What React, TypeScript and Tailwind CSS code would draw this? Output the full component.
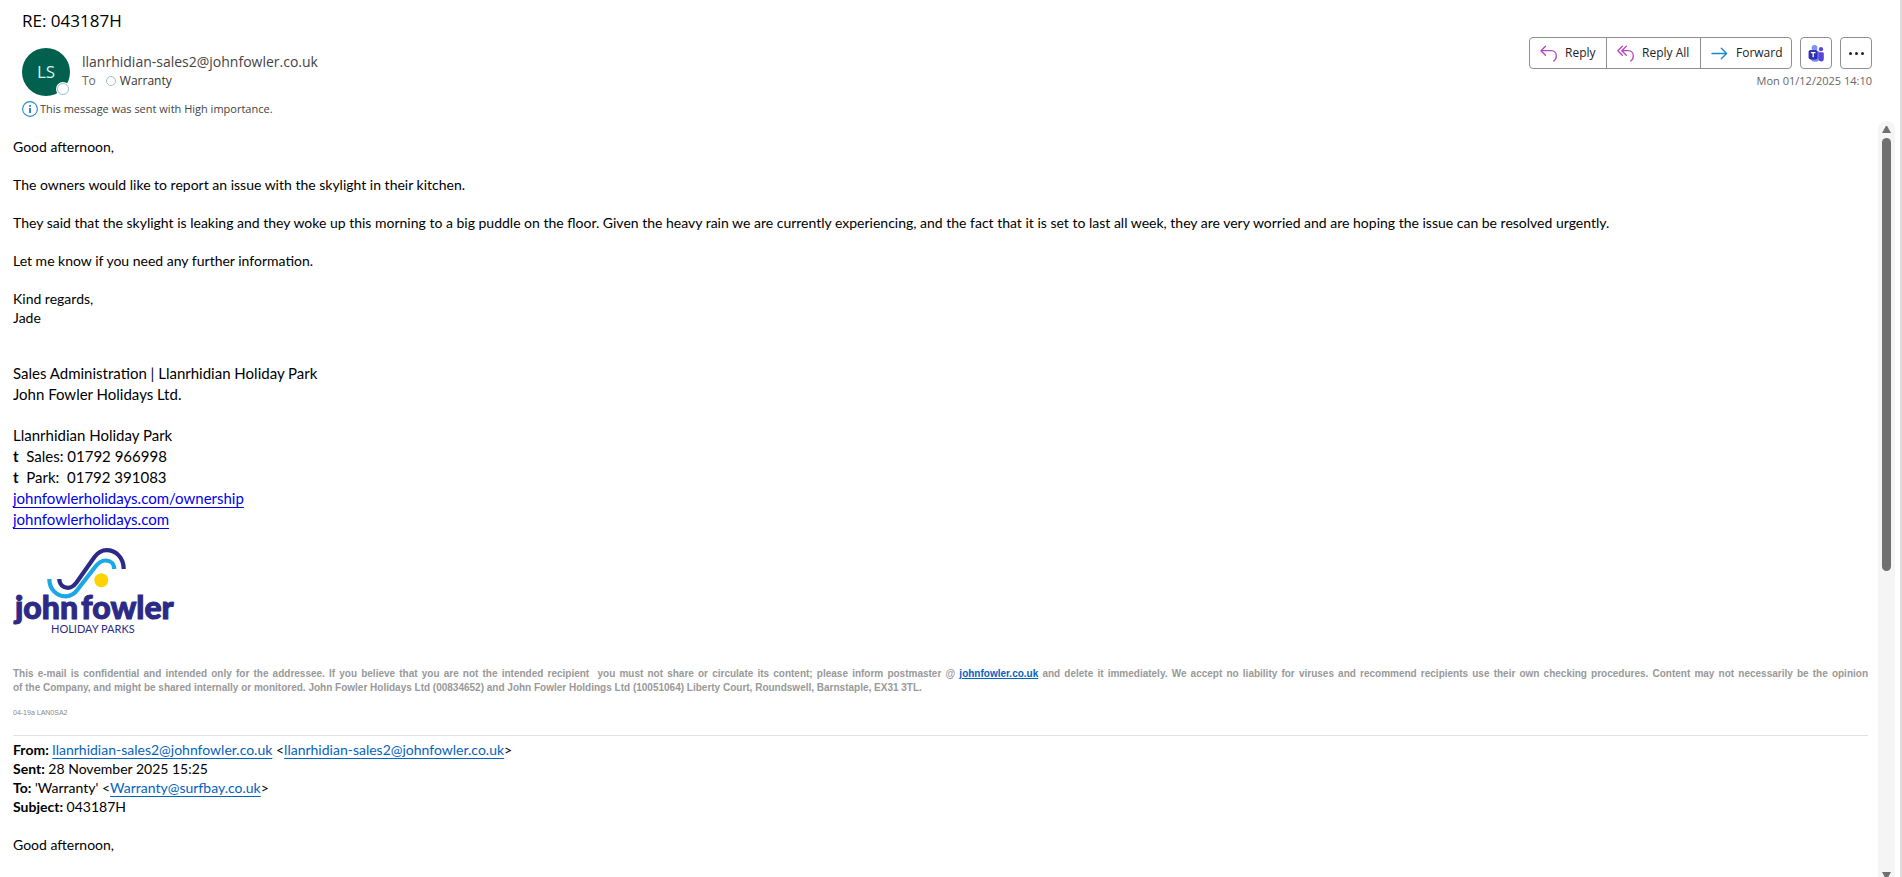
import React from 'react';

const legalLink = 'font-bold text-[#0563c1] underline';
const mailLink = 'text-[#0563c1] underline underline-offset-3';
const siteLink = 'text-[#0000ee] underline underline-offset-3';

const ReplyIcon = () => (
  <svg width="17" height="17" viewBox="0 0 17 17" fill="none" stroke="#b146c2" strokeWidth="1.3" strokeLinecap="round" strokeLinejoin="round">
    <path d="M5.5 1.2 1 5.7l4.5 4.5M1 5.7h10.3c3 0 5 2.2 5 5.2 0 2.4-1 4-2.6 5" />
  </svg>
);

const ReplyAllIcon = () => (
  <svg width="17" height="17" viewBox="0 0 17 17" fill="none" stroke="#b146c2" strokeWidth="1.3" strokeLinecap="round" strokeLinejoin="round">
    <path d="M5.3 1.2.8 5.7l4.5 4.5M9.3 1.2 4.8 5.7l4.5 4.5M4.8 5.7h6.5c3 0 5 2.2 5 5.2 0 2.4-1 4-2.6 5" />
  </svg>
);

const ForwardIcon = () => (
  <svg width="17" height="17" viewBox="0 0 17 17" fill="none" stroke="#1a86d0" strokeWidth="1.3" strokeLinecap="round" strokeLinejoin="round">
    <path d="M1 8.5h14.5M10.3 3.2l5.3 5.3-5.3 5.2" />
  </svg>
);

const TeamsIcon = () => (
  <svg width="17" height="17" viewBox="0 0 17 17">
    <circle cx="6.5" cy="3" r="2.9" fill="#7b93f8" />
    <path d="M3 6.2h8.2v7a3.6 3.6 0 0 1-3.6 3.6H6.5A3.6 3.6 0 0 1 3 13.2z" fill="#748cf8" />
    <circle cx="13" cy="4.2" r="2.1" fill="#5a45d8" />
    <path d="M10.6 7.2h4a1.2 1.2 0 0 1 1.2 1.2v5.4a2.6 2.6 0 0 1-5.2 0z" fill="#5a45d8" />
    <rect x="0.6" y="5" width="9" height="9.4" rx="1.8" fill="#332fae" />
    <path d="M2.9 7.6h4.6M5.2 7.6v4.6" stroke="#fff" strokeWidth="1.3" />
  </svg>
);

const MoreIcon = () => (
  <svg width="17" height="17" viewBox="0 0 17 17" fill="#222">
    <circle cx="2.5" cy="8.5" r="1.5" />
    <circle cx="8.5" cy="8.5" r="1.5" />
    <circle cx="14.5" cy="8.5" r="1.5" />
  </svg>
);

const InfoIcon = () => (
  <svg width="16" height="16" viewBox="0 0 16 16" fill="none">
    <circle cx="8" cy="8" r="7.4" stroke="#2b88d0" strokeWidth="1.1" />
    <path d="M8 7v5M8 4v1.8" stroke="#1a7acb" strokeWidth="1.8" />
  </svg>
);

const Logo = () => (
  <svg width="162" height="92" viewBox="0 0 162 92" className="overflow-visible" role="img" aria-label="john fowler holiday parks">
    <g fill="none" strokeWidth="4.2">
      <path d="M46.3 31c0 5.500 4 8.800 8.500 8.800 4 0 6.200-2 8.500-5L81.500 9C85 4.500 88.500 2.200 93.500 2.200c9.500 0 17.200 7.500 17.200 18.800" stroke="#2c2a86" />
      <path d="M36.3 31c0 10 7.200 17.300 16.200 17.300 6 0 9.500-3 12.500-7.300L82.500 18.500c3-4 6-6 10.200-6 4.800 0 8.500 3.300 8.500 8.500" stroke="#1ba9e6" />
    </g>
    <circle cx="88.3" cy="32.3" r="7" fill="#fdd307" />
    <g fill="#2c2a86" fontFamily="Lato, sans-serif">
      <text x="2" y="71" fontSize="32" fontWeight="900" stroke="#2c2a86" strokeWidth="1">john</text>
      <text x="68" y="71" fontSize="32" fontWeight="900" stroke="#2c2a86" strokeWidth="1">fowler</text>
      <text x="38" y="85" fontSize="11">HOLIDAY PARKS</text>
    </g>
  </svg>
);

export default function App() {
  return (
    <div className="flex h-screen flex-col overflow-hidden border-r-2 border-[#dcdcdc] bg-white font-['Open_Sans',sans-serif] text-[#444]">
      <header className="flex shrink-0 flex-col pr-7 pl-[22px]">
        <h1 className="pt-[9px] text-[17px] leading-6 text-black">RE: 043187H</h1>

        <div className="flex items-start justify-between pt-[3px]">
          <div className="flex items-start gap-3 pt-3">
            <div className="relative flex size-12 items-center justify-center rounded-full bg-[#02604f] text-[17px] text-[#d9efe9]">
              LS
              <span className="absolute right-0 bottom-0 flex size-3.5 items-center justify-center rounded-full bg-white">
                <span className="size-3 rounded-full border border-[#9fbfcb]" />
              </span>
            </div>
            <div>
              <p className="pt-1 text-sm leading-5">llanrhidian-sales2@johnfowler.co.uk</p>
              <p className="flex items-center text-xs leading-[18px]">
                <span className="mr-2.5 text-[#666]">To</span>
                <span className="mr-1 size-2.5 rounded-full border border-[#9fbfcb]" />
                <span className="text-[#333]">Warranty</span>
              </p>
            </div>
          </div>

          <div className="flex flex-col items-end gap-0.5 pt-px">
            <div className="flex gap-2 text-xs text-[#222]">
              <div className="flex h-8 divide-x divide-[#8f8f8f] rounded border border-[#8f8f8f]">
                <button className="flex w-[77px] items-center gap-2 pl-2.5"><ReplyIcon />Reply</button>
                <button className="flex w-[94px] items-center gap-2 pl-2.5 whitespace-nowrap"><ReplyAllIcon />Reply All</button>
                <button className="flex w-[90px] items-center gap-2 pl-2.5"><ForwardIcon />Forward</button>
              </div>
              <button aria-label="Share to Teams" className="flex size-8 items-center justify-center rounded border border-[#8f8f8f]"><TeamsIcon /></button>
              <button aria-label="More actions" className="flex size-8 items-center justify-center rounded border border-[#8f8f8f]"><MoreIcon /></button>
            </div>
            <time className="text-[11px] leading-5 text-[#666]">Mon 01/12/2025 14:10</time>
          </div>
        </div>

        <p className="flex items-center gap-0.5 pt-[5px] pb-1 text-[11px] leading-4">
          <InfoIcon />
          This message was sent with High importance.
        </p>
      </header>

      <div className="flex min-h-0 flex-1">
        {/* Message body */}
        <main className="min-w-0 flex-1 overflow-hidden pt-4 pr-2.5 pl-[13px] font-[Lato,sans-serif] text-sm leading-[19px] text-black">
          <div className="flex flex-col gap-[19px]">
            <p>Good afternoon,</p>
            <p>The owners would like to report an issue with the skylight in their kitchen.</p>
            <p>They said that the skylight is leaking and they woke up this morning to a big puddle on the floor. Given the heavy rain we are currently experiencing, and the fact that it is set to last all week, they are very worried and are hoping the issue can be resolved urgently.</p>
            <p>Let me know if you need any further information.</p>
            <p>Kind regards,<br />Jade</p>
          </div>

          {/* Signature */}
          <div className="pt-9 text-[15px] leading-[21px]">
            <p>Sales Administration | Llanrhidian Holiday Park</p>
            <p>John Fowler Holidays Ltd.</p>
            <p className="pt-5">Llanrhidian Holiday Park</p>
            <p className="whitespace-pre"><b>t</b>  Sales: 01792 966998</p>
            <p className="whitespace-pre"><b>t</b>  Park:  01792 391083</p>
            <p><a href="#ownership" className={siteLink}>johnfowlerholidays.com/ownership</a></p>
            <p><a href="#home" className={siteLink}>johnfowlerholidays.com</a></p>
          </div>
          <div className="pt-[18px] pb-5">
            <Logo />
          </div>

          <div className="pt-[7px] font-['Liberation_Sans',sans-serif] text-[10px] leading-[14px] font-bold text-[#999]">
            <p className="xl:[text-align-last:justify]">
              This e-mail is confidential and intended only for the addressee. If you believe that you are not the intended recipient &nbsp;you must not share or circulate its content; please inform postmaster @ <a href="#site" className={legalLink}>johnfowler.co.uk</a> and delete it immediately. We accept no liability for viruses and recommend recipients use their own checking procedures. Content may not necessarily be the opinion
            </p>
            <p>of the Company, and might be shared internally or monitored. John Fowler Holidays Ltd (00834652) and John Fowler Holdings Ltd (10051064) Liberty Court, Roundswell, Barnstaple, EX31 3TL.</p>
          </div>
          <p className="pt-3 font-['Liberation_Sans',sans-serif] text-[7px] leading-3 text-[#888]">04-19a LAN0SA2</p>

          {/* Quoted message */}
          <div className="mt-4 border-t border-[#e1e1e1] pt-1">
            <p><b>From:</b> <a href="#from" className={mailLink}>llanrhidian-sales2@johnfowler.co.uk</a> &lt;<a href="#from" className={mailLink}>llanrhidian-sales2@johnfowler.co.uk</a>&gt;</p>
            <p><b>Sent:</b> 28 November 2025 15:25</p>
            <p><b>To:</b> 'Warranty' &lt;<a href="#to" className={mailLink}>Warranty@surfbay.co.uk</a>&gt;</p>
            <p><b>Subject:</b> 043187H</p>
            <p className="pt-[19px]">Good afternoon,</p>
          </div>
        </main>

        {/* Scrollbar */}
        <div className="mr-[5px] flex w-[17px] shrink-0 flex-col items-center justify-between overflow-hidden rounded-t-lg bg-[#f5f5f5] pt-1">
          <div className="flex h-full w-full flex-col items-center gap-[5px]">
            <svg width="9" height="8" viewBox="0 0 9 8" className="shrink-0" fill="#707070"><path d="M3.6 1.5Q4.5 0 5.4 1.5L9 8H0z" /></svg>
            <div className="h-[58%] w-[9px] rounded-full bg-[#707070]" />
          </div>
          <svg width="9" height="5" viewBox="0 0 9 5" className="shrink-0" fill="#707070"><path d="M0 0h9L6.3 5H2.7z" /></svg>
        </div>
      </div>
    </div>
  );
}
